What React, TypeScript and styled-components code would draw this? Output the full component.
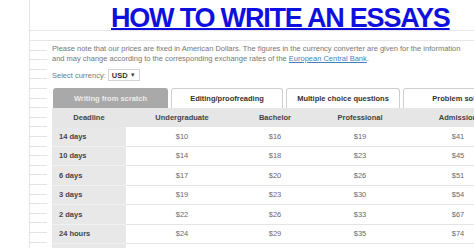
import React from 'react';
import styled, {createGlobalStyle} from 'styled-components';

const GlobalStyle = createGlobalStyle`
    html, body {
        margin: 0;
        width: 474px;
        height: 248px;
        overflow: hidden;
        background: #ffffff;
        font-family: "Liberation Sans", Arial, sans-serif;
    }
`

const Page = styled.div`
    margin-left: 29px;
    border-left: 1px solid #e4e4e4;
    height: 248px;
    display: flex;
    flex-direction: column;
    overflow: hidden;
`
const Header = styled.header`
    height: 31px;
    box-sizing: border-box;
    border-bottom: 1px solid #e6e6e6;
    padding: 5px 0 0 81px;
    white-space: nowrap;
`
const Title = styled.h1`
    margin: 0;
    font: bold 27px/1 "Liberation Sans", Arial, sans-serif;
    letter-spacing: -1.2px;
    color: #0f0fe0;
    text-decoration: underline;
    text-decoration-thickness: 2px;
    text-underline-offset: 1px;
`
const SubBar = styled.div`
    height: 10px;
    box-sizing: border-box;
    border-bottom: 1px solid #e6e6e6;
`
const Body = styled.div`
    flex: 1;
    min-height: 0;
    display: flex;
`
const Ruler = styled.div`
    width: 17px;
    flex-shrink: 0;
    background: repeating-linear-gradient(to bottom, transparent 0 8.6px, #e3e3e3 8.6px 9.6px);
`
const Content = styled.div`
    flex: 1;
    min-width: 0;
    padding: 3px 0 0 5px;
    font-size: 7.5px;
    color: #777;
`
const Note = styled.p`
    margin: 0;
    line-height: 9.5px;
    white-space: nowrap;
`
const Link = styled.a`
    color: #4a7ebb;
    text-decoration: underline;
`
const CurrencyRow = styled.div`
    margin-top: 6px;
    height: 12px;
    display: flex;
    align-items: center;
    gap: 2px;
`
const Select = styled.div`
    width: 32px;
    height: 12px;
    box-sizing: border-box;
    border: 1px solid #d4d4d4;
    display: flex;
    align-items: center;
    justify-content: space-between;
    padding: 0 3px 0 3px;
    font-weight: bold;
    color: #333;
`
const Caret = styled.span`
    font-size: 6px;
    color: #444;
`
const Tabs = styled.div`
    margin: 7px 0 0 1px;
    display: flex;
    gap: 3px;
`
const Tab = styled.div<{ active?: boolean; w: number }>`
    flex-shrink: 0;
    width: ${({w}) => w}px;
    height: 20px;
    box-sizing: border-box;
    border: 1px solid ${({active}) => active ? '#a9a9a9' : '#cfcfcf'};
    border-bottom: none;
    border-radius: 3px 3px 0 0;
    background: ${({active}) => active ? '#a9a9a9' : '#ffffff'};
    color: ${({active}) => active ? '#ececec' : '#333'};
    font-weight: bold;
    display: flex;
    align-items: center;
    justify-content: center;
    white-space: nowrap;
`
const Row = styled.div<{ head?: boolean }>`
    display: grid;
    grid-template-columns: 74px 112px 74px 96px 100px;
    height: ${({head}) => head ? '19px' : '19.5px'};
    background: ${({head}) => head ? '#e6e6e6' : '#ffffff'};
`
const HeadCell = styled.div`
    display: flex;
    align-items: center;
    justify-content: center;
    font-weight: bold;
    color: #444;
    white-space: nowrap;
`
const Cell = styled.div<{ first?: boolean }>`
    display: flex;
    align-items: center;
    justify-content: ${({first}) => first ? 'flex-start' : 'center'};
    padding-left: ${({first}) => first ? '7px' : '0'};
    box-sizing: border-box;
    border-bottom: 1px solid ${({first}) => first ? '#f1f1f1' : '#e4e4e4'};
    background: ${({first}) => first ? '#e8e8e8' : 'transparent'};
    font-weight: ${({first}) => first ? 'bold' : 'normal'};
    color: ${({first}) => first ? '#444' : '#6a6a6a'};
    white-space: nowrap;
`

const tabs = [
    {label: 'Writing from scratch', w: 115},
    {label: 'Editing/proofreading', w: 112},
    {label: 'Multiple choice questions', w: 114},
    {label: 'Problem solving', w: 117},
]
const heads = ['Deadline', 'Undergraduate', 'Bachelor', 'Professional', 'Admission']
const rows = [
    ['14 days', '$10', '$16', '$19', '$41'],
    ['10 days', '$14', '$18', '$23', '$45'],
    ['6 days', '$17', '$20', '$26', '$51'],
    ['3 days', '$19', '$23', '$30', '$54'],
    ['2 days', '$22', '$26', '$33', '$67'],
    ['24 hours', '$24', '$29', '$35', '$74'],
    ['', '', '', '', ''],
]

export default function App() {
    return (
        <>
            <GlobalStyle/>
            <Page>
                <Header>
                    <Title>HOW TO WRITE AN ESSAYS</Title>
                </Header>
                <SubBar/>
                <Body>
                    <Ruler/>
                    <Content>
                        <Note>
                            Please note that our prices are fixed in American Dollars. The figures in the currency converter are given for the information<br/>
                            and may change according to the corresponding exchange rates of the <Link>European Central Bank</Link>.
                        </Note>
                        <CurrencyRow>
                            <span>Select currency:</span>
                            <Select>USD <Caret>▼</Caret></Select>
                        </CurrencyRow>
                        <Tabs>
                            {tabs.map((t, i) => (
                                <Tab key={t.label} w={t.w} active={i === 0}>{t.label}</Tab>
                            ))}
                        </Tabs>
                        <Row head>
                            {heads.map((h) => <HeadCell key={h}>{h}</HeadCell>)}
                        </Row>
                        {rows.map((r, n) => (
                            <Row key={n}>
                                {r.map((v, i) => <Cell key={i} first={i === 0}>{v}</Cell>)}
                            </Row>
                        ))}
                    </Content>
                </Body>
            </Page>
        </>
    )
}
